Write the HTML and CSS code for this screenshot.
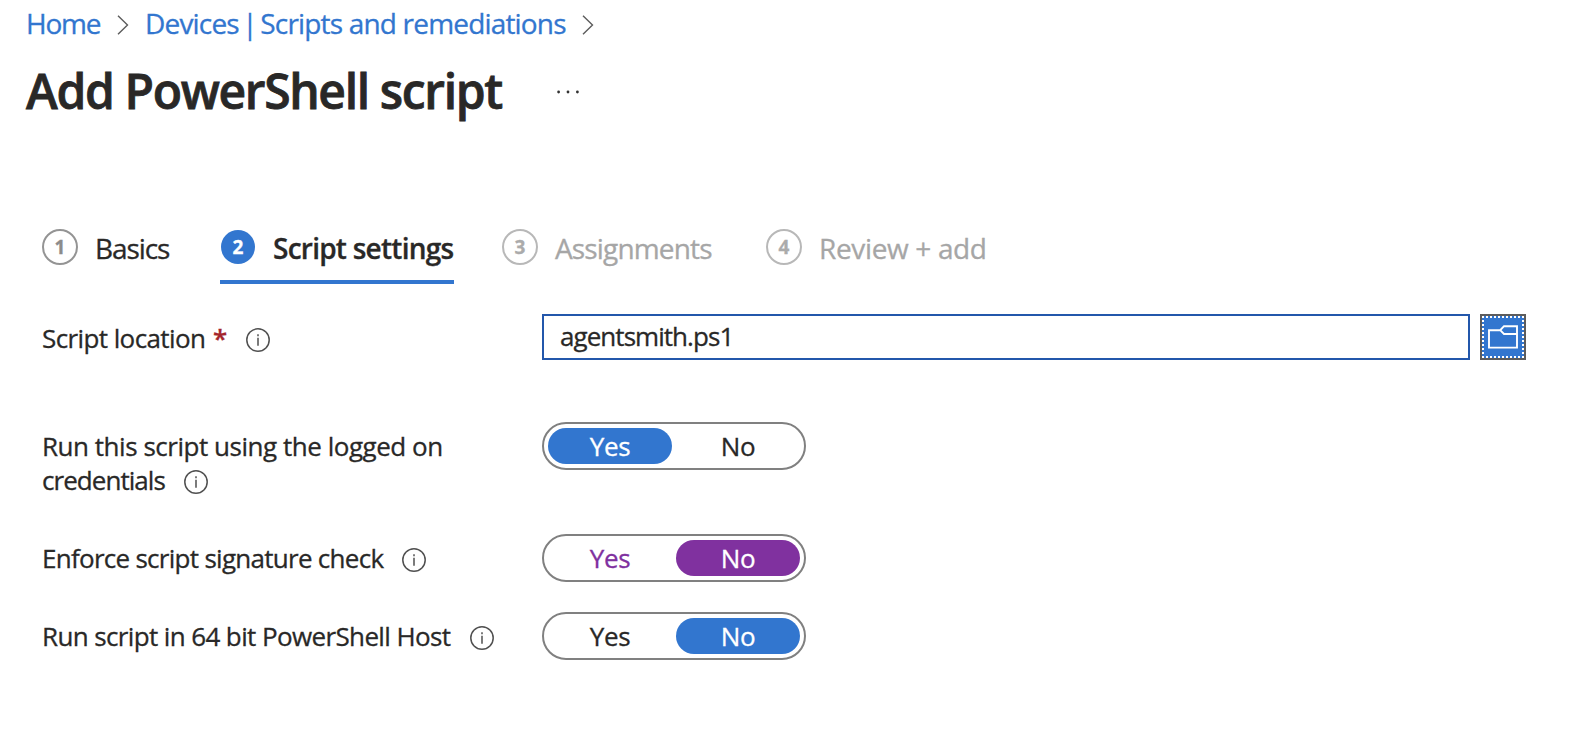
FILE: index.html
```
<!DOCTYPE html>
<html lang="en">
<head>
<meta charset="utf-8">
<title>Add PowerShell script</title>
<link rel="stylesheet" href="styles.css">
</head>
<body>
<svg class="defs" width="0" height="0" aria-hidden="true">
  <symbol id="info" viewBox="0 0 24 24"><circle cx="12" cy="12" r="11.2" fill="none" stroke="#505050" stroke-width="1.5"/><path d="M12 9.8v8M12 6.3v2" stroke="#505050" stroke-width="1.5" fill="none"/></symbol>
  <symbol id="chevron" viewBox="0 0 12 20"><path d="M1 .7 10.5 10 1 19.3" fill="none" stroke="#5c5c5c" stroke-width="1.4"/></symbol>
</svg>
<nav class="crumbs">
  <a class="crumb-home">Home</a>
  <svg class="chevron"><use href="#chevron"/></svg>
  <a class="crumb-devices">Devices <span class="bar">|</span> Scripts and remediations</a>
  <svg class="chevron"><use href="#chevron"/></svg>
</nav>
<header class="header">
  <h1 class="title">Add PowerShell script</h1>
  <svg class="more" viewBox="0 0 22 4"><circle cx="1.6" cy="2" r="1.4"/><circle cx="11" cy="2" r="1.4"/><circle cx="20.4" cy="2" r="1.4"/></svg>
</header>
<div class="steps">
  <div class="step step-basics"><span class="num">1</span><span class="step-text">Basics</span></div>
  <div class="step step-current"><span class="num">2</span><span class="step-text">Script settings</span></div>
  <div class="step step-assign"><span class="num">3</span><span class="step-text">Assignments</span></div>
  <div class="step step-review"><span class="num">4</span><span class="step-text">Review + add</span></div>
</div>
<main class="form">
  <div class="row row-location">
    <div class="label label-location"><span class="text">Script location</span><span class="star">*</span><svg class="info"><use href="#info"/></svg></div>
    <div class="field"><span class="file">agentsmith.ps1</span></div>
    <button class="browse" aria-label="Browse">
      <svg class="folder" viewBox="0 0 30 24"><path d="M1 5.2H12.2L16 1.2H29V22.6H1Z M12.2 5.2 16 9H29" fill="none" stroke="#fff" stroke-width="1.9"/></svg>
    </button>
  </div>
  <div class="row row-credentials">
    <div class="label label-credentials"><span class="text">Run this script using the logged on<br><span class="second-line">credentials</span></span><svg class="info"><use href="#info"/></svg></div>
    <div class="toggle"><span class="option on">Yes</span><span class="option">No</span></div>
  </div>
  <div class="row row-signature">
    <div class="label label-signature"><span class="text">Enforce script signature check</span><svg class="info"><use href="#info"/></svg></div>
    <div class="toggle changed"><span class="option">Yes</span><span class="option on">No</span></div>
  </div>
  <div class="row row-host">
    <div class="label label-host"><span class="text">Run script in 64 bit PowerShell Host</span><svg class="info"><use href="#info"/></svg></div>
    <div class="toggle"><span class="option">Yes</span><span class="option on">No</span></div>
  </div>
</main>
</body>
</html>
```
FILE: styles.css
```
* { box-sizing: border-box; }
body {
  margin: 0;
  width: 1594px;
  height: 732px;
  overflow: hidden;
  background: #fff;
  color: #292827;
  font-family: "Open Sans", "Noto Sans", sans-serif;
  font-size: 26px;
  letter-spacing: -0.4px;
  white-space: nowrap;
  -webkit-text-stroke: 0.3px currentColor;
}
.defs { display: block; height: 0; }
svg { flex: none; }
.crumbs {
  display: flex;
  align-items: center;
  height: 50px;
  padding-left: 26px;
  font-size: 28px;
  line-height: 47px;
  color: #3276cf;
}
.crumbs a { height: 50px; }
.crumb-home { width: 91px; letter-spacing: -1.2px; }
.crumb-devices { width: 437px; margin-left: 16px; letter-spacing: -0.82px; }
.bar { margin: 0 -3px; }
.chevron { width: 12px; height: 20px; }
.header { display: flex; align-items: center; height: 84px; padding-left: 26px; }
.title { margin: 0; width: 531px; height: 84px; font-size: 48px; line-height: 82px; font-weight: 600; letter-spacing: -1.35px; -webkit-text-stroke-width: 0.8px; }
.more { width: 22px; height: 4px; fill: #333; }
.steps { display: flex; height: 60px; margin: 90px 0 0 42px; font-size: 28px; }
.step { display: flex; height: 60px; line-height: 49px; }
.num {
  flex: none;
  width: 36px;
  height: 36px;
  margin-top: 5px;
  border: 2px solid #949494;
  border-radius: 50%;
  color: #8c8c8c;
  font-size: 19px;
  line-height: 33px;
  font-weight: 700;
  text-align: center;
  letter-spacing: 0;
}
.step-text { margin-left: 17px; }
.step-basics { width: 178px; letter-spacing: -1.1px; }
.step-current { width: 234px; margin-right: 48px; border-bottom: 4px solid #3276cf; font-weight: 600; letter-spacing: -0.75px; }
.step-current .num { width: 34px; height: 34px; margin: 6px 0 0 1px; border: 0; background: #3276cf; color: #fff; line-height: 35px; }
.step-current .step-text { margin-left: 18px; }
.step-assign { width: 264px; letter-spacing: -0.85px; }
.step-review { letter-spacing: -0.35px; }
.step-assign, .step-review { color: #a6a6a6; }
.step-assign .num, .step-review .num { border-color: #b8b8b8; color: #ababab; }
.form { display: flex; flex-direction: column; padding: 30px 0 0 42px; }
.row { display: flex; align-items: flex-start; }
.label { display: flex; align-items: flex-end; flex: none; width: 500px; padding-top: 7px; line-height: 34px; }
.info { width: 24px; height: 24px; margin-bottom: 3px; }
.row-location { height: 108px; }
.label-location .text { width: 171px; letter-spacing: -0.6px; }
.label-location .star { width: 33px; color: #a4262c; font-weight: 600; }
.field { width: 928px; height: 46px; border: 2px solid #2357ab; padding-left: 16px; line-height: 41px; letter-spacing: -0.95px; }
.browse { display: grid; place-items: center; width: 46px; height: 46px; margin-left: 10px; padding: 0; border: 2px solid #5c5c5c; background: #3276cf; outline: 2px dotted #fff; outline-offset: -4px; }
.folder { width: 30px; height: 24px; }
.row-credentials { height: 112px; }
.label-credentials { position: relative; letter-spacing: -0.47px; }
.label-credentials .info { position: absolute; left: 142px; bottom: 0; }
.second-line { letter-spacing: -0.95px; }
.row-signature { height: 78px; }
.label-signature .text { width: 360px; letter-spacing: -0.72px; }
.label-host .text { width: 428px; letter-spacing: -0.62px; }
.toggle { display: flex; gap: 4px; width: 264px; height: 48px; padding: 4px; border: 2px solid #808080; border-radius: 24px; }
.option { width: 124px; height: 36px; border-radius: 18px; line-height: 36px; text-align: center; }
.changed { color: #80319f; }
.on { background: #3276cf; color: #fff; }
.changed .on { background: #80319f; }
```
